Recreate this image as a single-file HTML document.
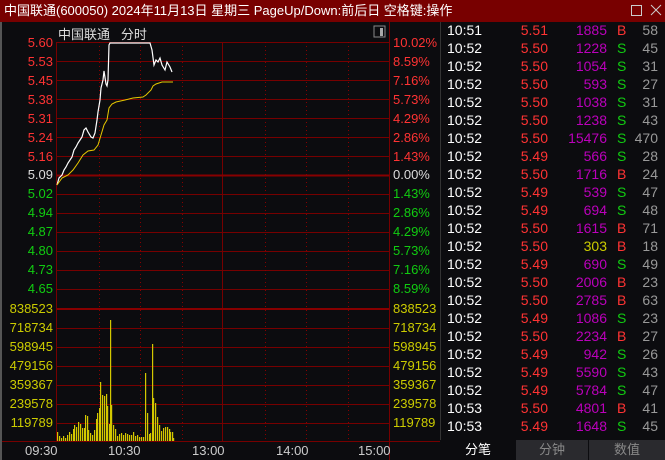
<!DOCTYPE html>
<html><head><meta charset="utf-8"><style>
*{margin:0;padding:0}
body{width:665px;height:460px;background:#0c0c0f;overflow:hidden;position:relative;font-family:"Liberation Sans","Noto Sans CJK SC",sans-serif;font-size:13px}
#title{position:absolute;left:0;top:0;width:665px;height:22px;background:#780000;color:#fff;font-size:13px;line-height:22px;padding-left:4px;box-sizing:border-box}
.t{position:absolute;white-space:nowrap}
#list .r{position:absolute;left:441px;width:224px;height:18px;font-size:14px;line-height:18px}
#list span{position:absolute}
.tabs{position:absolute;top:440px;height:20px;line-height:20px;text-align:center;font-size:13px;color:#888}
</style></head><body>
<div id="title">中国联通(600050) 2024年11月13日 星期三 PageUp/Down:前后日 空格键:操作</div>
<svg width="665" height="460" style="position:absolute;left:0;top:0">
<rect x="0" y="22" width="2" height="438" fill="#555"/>
<rect x="440" y="22" width="1" height="418" fill="#333"/>
<g stroke="#700" stroke-width="1">
<line x1="57" y1="42.5" x2="389" y2="42.5"/><line x1="57" y1="61.5" x2="389" y2="61.5"/><line x1="57" y1="80.5" x2="389" y2="80.5"/><line x1="57" y1="99.5" x2="389" y2="99.5"/><line x1="57" y1="118.5" x2="389" y2="118.5"/><line x1="57" y1="137.5" x2="389" y2="137.5"/><line x1="57" y1="156.5" x2="389" y2="156.5"/>
<line x1="57" y1="194.5" x2="389" y2="194.5"/><line x1="57" y1="213.5" x2="389" y2="213.5"/><line x1="57" y1="232.5" x2="389" y2="232.5"/><line x1="57" y1="251.5" x2="389" y2="251.5"/><line x1="57" y1="270.5" x2="389" y2="270.5"/><line x1="57" y1="289.5" x2="389" y2="289.5"/>
<line x1="57" y1="328.5" x2="389" y2="328.5"/><line x1="57" y1="347.5" x2="389" y2="347.5"/><line x1="57" y1="366.5" x2="389" y2="366.5"/><line x1="57" y1="385.5" x2="389" y2="385.5"/><line x1="57" y1="404.5" x2="389" y2="404.5"/><line x1="57" y1="423.5" x2="389" y2="423.5"/>
<line x1="2" y1="441.5" x2="440" y2="441.5"/>
<line x1="56.5" y1="42" x2="56.5" y2="441"/><line x1="222.5" y1="42" x2="222.5" y2="441"/><line x1="389.5" y1="22" x2="389.5" y2="460"/>
</g>
<line x1="57" y1="175.5" x2="389" y2="175.5" stroke="#800" stroke-width="2"/>
<line x1="57" y1="309" x2="389" y2="309" stroke="#800" stroke-width="2"/>
<g stroke="#800" stroke-width="1" stroke-dasharray="1,3">
<line x1="99.5" y1="42" x2="99.5" y2="441"/><line x1="140.5" y1="42" x2="140.5" y2="441"/><line x1="182.5" y1="42" x2="182.5" y2="441"/><line x1="265.5" y1="42" x2="265.5" y2="441"/><line x1="306.5" y1="42" x2="306.5" y2="441"/><line x1="348.5" y1="42" x2="348.5" y2="441"/>
</g>
<rect x="374" y="26" width="11" height="11" fill="none" stroke="#888"/><rect x="380" y="28" width="3" height="8" fill="#aaa"/>
<polyline fill="none" stroke="#fff" stroke-width="1.2" points="57,185 59,178 62,175 64,170 66,167 68,163 72,157 74,150 76,147 78,143 80,140 82,137 84,130 86,128 88,132 91,137 93,138 95,133 97,120 98,112 100,100 101,88 103,80 104,71 106,84 107,86 108,80 109,45 110,43 150,43 152,50 154,65 156,60 158,62 160,58 162,65 165,70 167,62 170,67 172,72"/>
<polyline fill="none" stroke="#e6c800" stroke-width="1" points="57,185 62,178 68,175 73,170 78,163 83,155 88,151 94,150 98,145 101,135 104,125 107,120 109,108 112,104 116,102 125,100 133,98 143,97 146,95 151,90 153,86 156,84 162,82 170,82 173,82"/>
<g id="vol" fill="#d4c800"></g>
<rect x="631.5" y="5.5" width="10" height="10" fill="none" stroke="#ccc" stroke-width="1"/>
<path d="M651 5 L661 15 M661 5 L651 15" stroke="#ccc" stroke-width="1"/>
</svg>
<div class="t" style="left:58px;top:24px;color:#ddd">中国联通 &nbsp; 分时</div>
<div id="ax"></div>
<div id="list"></div>
<div class="tabs" style="left:441px;width:74px;background:#0c0c0f;color:#fff">分笔</div>
<div class="tabs" style="left:516px;width:72px;background:#2a2a2e">分钟</div>
<div class="tabs" style="left:589px;width:76px;background:#2a2a2e">数值</div>
<script>
var ax=document.getElementById('ax'),h='';
var L=[["5.60","10.02%","#f33"],["5.53","8.59%","#f33"],["5.45","7.16%","#f33"],["5.38","5.73%","#f33"],["5.31","4.29%","#f33"],["5.24","2.86%","#f33"],["5.16","1.43%","#f33"],["5.09","0.00%","#ddd"],["5.02","1.43%","#1c1"],["4.94","2.86%","#1c1"],["4.87","4.29%","#1c1"],["4.80","5.73%","#1c1"],["4.73","7.16%","#1c1"],["4.65","8.59%","#1c1"]];
L.forEach(function(a,i){var y=43+i*18.92-8;h+='<div class="t" style="right:612px;top:'+y+'px;color:'+a[2]+'">'+a[0]+'</div><div class="t" style="left:393px;top:'+y+'px;color:'+a[2]+'">'+a[1]+'</div>';});
["838523","718734","598945","479156","359367","239578","119789"].forEach(function(v,i){var y=309+i*19-8;h+='<div class="t" style="right:612px;top:'+y+'px;color:#cc0">'+v+'</div><div class="t" style="left:393px;top:'+y+'px;color:#cc0">'+v+'</div>';});
[["09:30",40],["10:30",123],["13:00",207],["14:00",291],["15:00",373]].forEach(function(a){h+='<div class="t" style="left:'+(a[1]-15)+'px;top:443px;color:#ccc">'+a[0]+'</div>';});
ax.innerHTML=h;
var vb=[[57,432],[59,436],[61,438],[63,436],[65,438],[67,435],[69,432],[71,434],[73,429],[74,425],[76,427],[78,422],[80,424],[82,428],[84,428],[85,415],[87,416],[88,430],[90,433],[92,435],[94,430],[96,419],[97,413],[99,408],[100,382],[102,395],[104,396],[106,394],[107,406],[109,424],[110,320],[111,405],[113,425],[115,429],[117,436],[119,434],[121,433],[123,435],[125,433],[127,434],[129,435],[131,435],[133,432],[135,436],[137,435],[139,437],[141,437],[143,437],[145,373],[147,413],[149,434],[150,433],[152,344],[153,398],[155,403],[157,417],[159,425],[161,431],[163,428],[165,427],[167,427],[169,429],[170,432],[172,432],[173,438]];
var vs='';vb.forEach(function(b){vs+='<rect x="'+b[0]+'" y="'+b[1]+'" width="1.2" height="'+(441-b[1])+'"/>';});
document.getElementById('vol').innerHTML=vs;
var R=[["10:51","5.51","1885","B","58"],["10:52","5.50","1228","S","45"],["10:52","5.50","1054","S","31"],["10:52","5.50","593","S","27"],["10:52","5.50","1038","S","31"],["10:52","5.50","1238","S","43"],["10:52","5.50","15476","S","470"],["10:52","5.49","566","S","28"],["10:52","5.50","1716","B","24"],["10:52","5.49","539","S","47"],["10:52","5.49","694","S","48"],["10:52","5.50","1615","B","71"],["10:52","5.50","303","B","18"],["10:52","5.49","690","S","49"],["10:52","5.50","2006","B","23"],["10:52","5.50","2785","B","63"],["10:52","5.49","1086","S","23"],["10:52","5.50","2234","B","27"],["10:52","5.49","942","S","26"],["10:52","5.49","5590","S","43"],["10:52","5.49","5784","S","47"],["10:53","5.50","4801","B","41"],["10:53","5.49","1648","S","45"]];
var ls='';R.forEach(function(r,i){var y=21+i*18;var vc=r[2]=="303"?"#cc0":"#b0b";
ls+='<div class="r" style="top:'+y+'px"><span style="left:6px;color:#fff">'+r[0]+'</span><span style="right:117px;color:#f33">'+r[1]+'</span><span style="right:58px;color:'+vc+'">'+r[2]+'</span><span style="left:176px;color:'+(r[3]=="B"?"#f33":"#1c1")+'">'+r[3]+'</span><span style="right:7px;color:#999">'+r[4]+'</span></div>';});
document.getElementById('list').innerHTML=ls;
</script>
</body></html>
